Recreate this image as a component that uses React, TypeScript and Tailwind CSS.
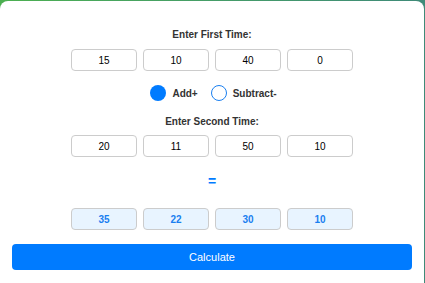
import { useState } from 'react'

const FONT = { fontFamily: '"Liberation Sans", Arial, sans-serif' }

function TimeRow({ values, result }: { values: string[]; result?: boolean }) {
  return (
    <div className="flex justify-center gap-[6px]">
      {values.map((v, i) => (
        <div
          key={i}
          className={
            result
              ? 'flex h-[22px] w-[66px] items-center justify-center rounded-[4px] border border-[#cccccc] bg-[#e8f4ff] text-[10px] font-bold text-[#1a7ff0]'
              : 'flex h-[22px] w-[66px] items-center justify-center rounded-[4px] border border-[#cccccc] bg-white text-[10px] text-black'
          }
        >
          {v}
        </div>
      ))}
    </div>
  )
}

export default function App() {
  const [mode, setMode] = useState<'add' | 'sub'>('add')

  return (
    <div className="h-[283px] overflow-hidden bg-gradient-to-r from-[#4caf50] to-[#3f8a78] pt-px" style={FONT}>
      <div className="h-[300px] w-[424px] rounded-[8px] bg-white px-[12px] pt-[27px]">
        <p className="text-center text-[10px] font-bold leading-[13px] text-[#333333]">Enter First Time:</p>
        <div className="mt-[8px]">
          <TimeRow values={['15', '10', '40', '0']} />
        </div>

        <div className="mt-[14px] flex items-center justify-center pl-[3px]">
          <button onClick={() => setMode('add')} className="flex items-center gap-[6px]">
            <span
              className={
                mode === 'add'
                  ? 'h-[16px] w-[16px] rounded-full bg-[#007bff]'
                  : 'h-[16px] w-[16px] rounded-full border-[1.5px] border-[#1a7ff0] bg-white'
              }
            />
            <span className="text-[10px] font-bold text-[#333333]">Add+</span>
          </button>
          <button onClick={() => setMode('sub')} className="ml-[13px] flex items-center gap-[6px]">
            <span
              className={
                mode === 'sub'
                  ? 'h-[16px] w-[16px] rounded-full bg-[#007bff]'
                  : 'h-[16px] w-[16px] rounded-full border-[1.5px] border-[#1a7ff0] bg-white'
              }
            />
            <span className="text-[10px] font-bold text-[#333333]">Subtract-</span>
          </button>
        </div>

        <p className="mt-[14px] text-center text-[10px] font-bold leading-[13px] text-[#333333]">Enter Second Time:</p>
        <div className="mt-[7px]">
          <TimeRow values={['20', '11', '50', '10']} />
        </div>

        <p className="mt-[15px] text-center text-[14px] font-bold leading-[18px] text-[#007bff]">=</p>

        <div className="mt-[18px]">
          <TimeRow values={['35', '22', '30', '10']} result />
        </div>

        <button className="mt-[14px] h-[26px] w-full rounded-[4px] bg-[#007bff] text-[11px] text-white">
          Calculate
        </button>
      </div>
    </div>
  )
}
